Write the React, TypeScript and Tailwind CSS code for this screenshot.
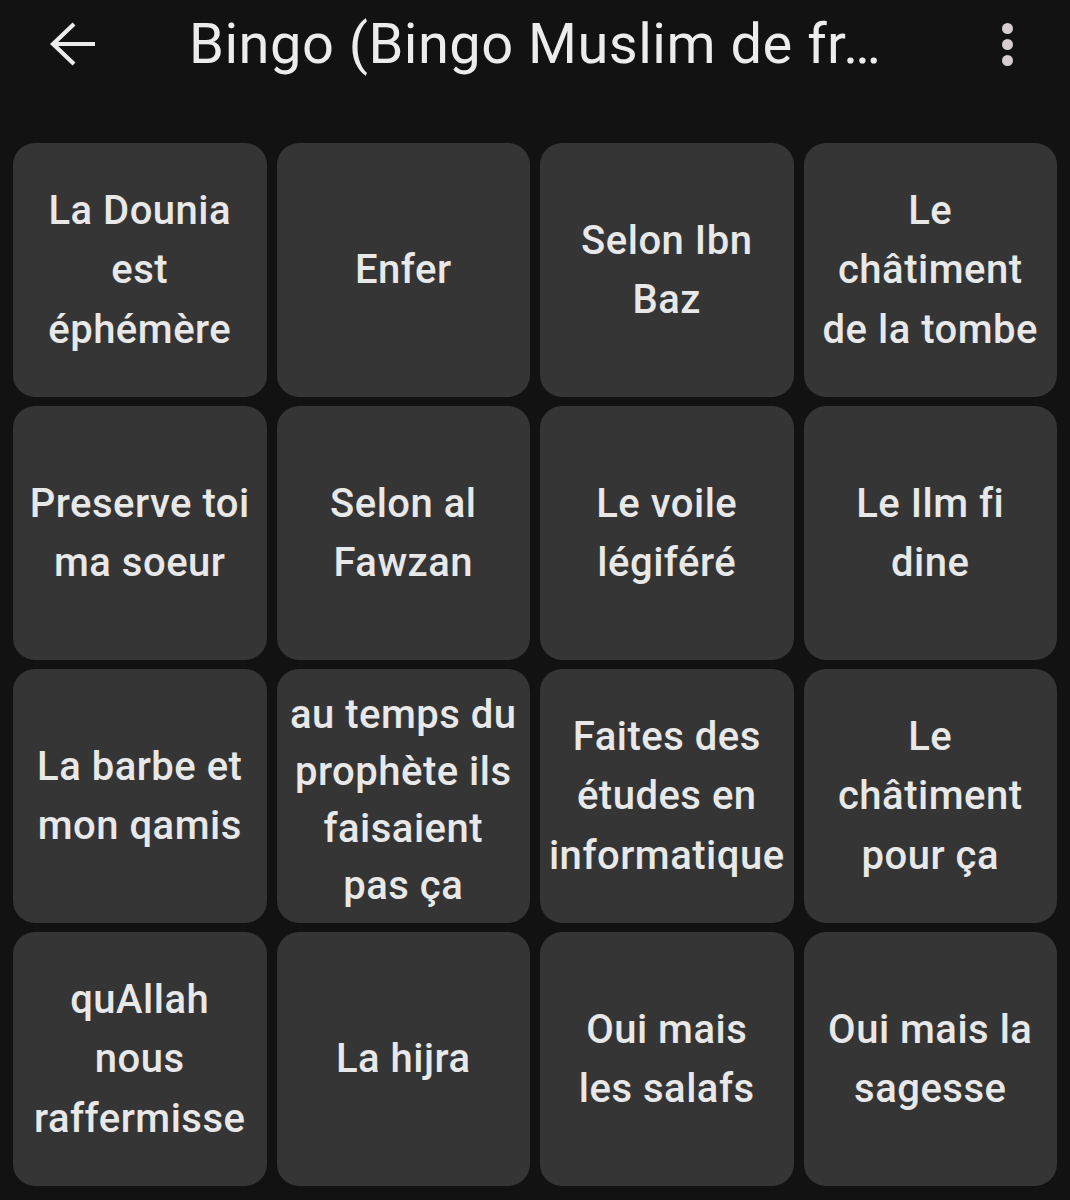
import React from "react";

const tiles: string[][] = [
  ["La Dounia", "est", "éphémère"],
  ["Enfer"],
  ["Selon Ibn", "Baz"],
  ["Le", "châtiment", "de la tombe"],
  ["Preserve toi", "ma soeur"],
  ["Selon al", "Fawzan"],
  ["Le voile", "légiféré"],
  ["Le Ilm fi", "dine"],
  ["La barbe et", "mon qamis"],
  ["au temps du", "prophète ils", "faisaient", "pas ça"],
  ["Faites des", "études en", "informatique"],
  ["Le", "châtiment", "pour ça"],
  ["quAllah", "nous", "raffermisse"],
  ["La hijra"],
  ["Oui mais", "les salafs"],
  ["Oui mais la", "sagesse"],
];

export default function App() {
  return (
    <div
      className="w-[1070px] h-[1200px] bg-[#121212] overflow-hidden [font-variant-ligatures:none]"
      style={{ fontFamily: "Roboto, 'Liberation Sans', sans-serif" }}
    >
      <div className="h-[88px] flex items-center relative">
        <div className="w-[189px] flex items-center pl-[50px]">
          <svg width="48" height="44" viewBox="0 0 48 44" fill="none">
            <path
              d="M3 22 H45 M24 2 L3 22 L24 42"
              stroke="#ececec"
              strokeWidth="4.2"
              strokeLinecap="butt"
              strokeLinejoin="miter"
            />
          </svg>
        </div>
        <div className="text-[56px] leading-none tracking-[0.5px] text-[#ececec] font-normal whitespace-nowrap mt-[-1px]">
          Bingo (Bingo Muslim de fr…
        </div>
        <div className="absolute left-[1002px] top-[23px] flex flex-col gap-[5px]">
          <span className="block w-[11px] h-[11px] rounded-full bg-[#d6ced2]" />
          <span className="block w-[11px] h-[11px] rounded-full bg-[#d6ced2]" />
          <span className="block w-[11px] h-[11px] rounded-full bg-[#d6ced2]" />
        </div>
      </div>
      <div className="pt-[55px] px-[13px] grid grid-cols-4 gap-x-[10px] gap-y-[9px]">
        {tiles.map((lines, i) => (
          <div
            key={i}
            className={
              "h-[254px] rounded-[22px] bg-[#353535] flex flex-col items-center justify-center text-center text-[#e8e8e8] text-[40px] tracking-[0.5px] font-medium " +
              (lines.length > 3 ? "leading-[57px] pt-[8px]" : "leading-[59.5px]")
            }
          >
            {lines.map((l, j) => (
              <div key={j} className="whitespace-nowrap">
                {l}
              </div>
            ))}
          </div>
        ))}
      </div>
    </div>
  );
}
